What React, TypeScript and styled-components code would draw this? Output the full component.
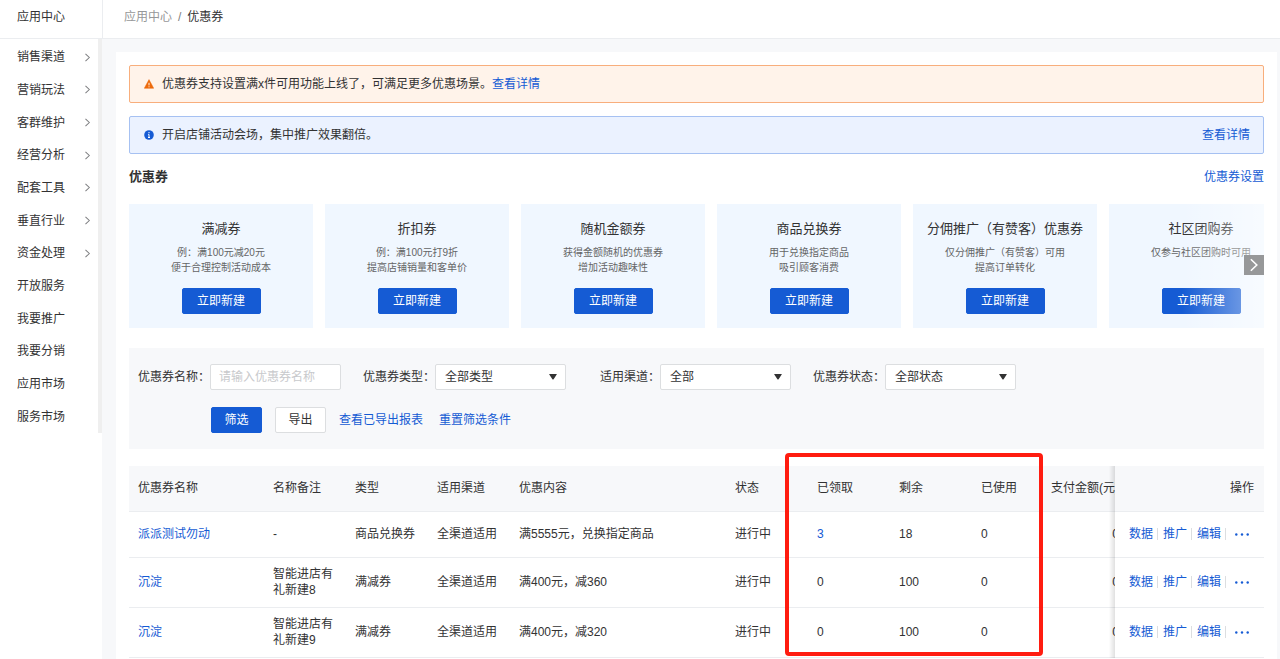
import React from 'react';
import styled, { createGlobalStyle, css } from 'styled-components';

const BLUE = '#155bd4';
const LINE = '#ebedf0';
const TEXT = 12;

const GlobalStyle = createGlobalStyle`
  *, *::before, *::after { box-sizing: border-box; }
  body {
    margin: 0;
    background: #fff;
    color: #323233;
    font: ${TEXT}px/16px "Liberation Sans", "Noto Sans CJK SC", sans-serif;
  }
  button, input, select { font: inherit; color: inherit; }
`;

const Page = styled.div`
  display: grid;
  grid-template-columns: 102px minmax(0, 1fr);
  grid-template-rows: 39px 1fr;
  min-height: 100vh;
`;

const SideTitle = styled.div`
  display: flex;
  align-items: center;
  padding: 0 17px 5px;
  border-bottom: 1px solid ${LINE};
`;

const TopBar = styled.header`
  display: flex;
  align-items: center;
  gap: 6px;
  padding: 0 21px 5px;
  border-left: 1px solid ${LINE};
  border-bottom: 1px solid ${LINE};
`;

const Crumb = styled.a`
  color: #969799;
  text-decoration: none;
`;

const Slash = styled.span`
  color: #7d7e80;
`;

const Sidebar = styled.div`
  display: flex;
  align-items: flex-start;
`;

const Menu = styled.nav`
  flex: 1;
  display: grid;
  grid-auto-rows: 1fr;
  min-height: 394px;
  padding-top: 2px;
  border-right: 4px solid #efefef;
`;

const MenuItem = styled.a`
  display: flex;
  align-items: center;
  justify-content: space-between;
  padding: 0 6px 0 17px;
  color: inherit;
  text-decoration: none;
`;

const Main = styled.main`
  display: flex;
  padding: 13px 3px 0 14px;
  background: #f7f8fa;
`;

const Panel = styled.div`
  flex: 1;
  min-width: 0;
  padding: 13px 13px 0;
  background: #fff;
`;

const Notice = styled.div<{ $tone: 'warn' | 'info' }>`
  display: flex;
  align-items: center;
  height: 38px;
  margin-bottom: 13px;
  padding: 0 13px 0 14px;
  border: 1px solid ${p => (p.$tone === 'warn' ? '#f8ae7c' : '#a6c1f2')};
  border-radius: 2px;
  background: ${p => (p.$tone === 'warn' ? '#fff3ea' : '#ebf2ff')};

  svg { margin-right: 8px; }
`;

const Link = styled.a<{ $push?: boolean }>`
  color: ${BLUE};
  text-decoration: none;
  white-space: nowrap;
  ${p => p.$push && css`margin-left: auto;`}
`;

const TitleRow = styled.div`
  display: flex;
  align-items: center;
  justify-content: space-between;
  margin-bottom: 18px;
  height: 19px;
`;

const Title = styled.h1`
  margin: 0;
  font-size: 13px;
  font-weight: 600;
`;

const Carousel = styled.section`
  position: relative;
  display: flex;
  gap: 12px;
  overflow: hidden;
`;

const Card = styled.article`
  flex: 0 0 184px;
  display: flex;
  flex-direction: column;
  align-items: center;
  height: 124px;
  padding: 16px 0 14px;
  background: #f0f7ff;
  text-align: center;
`;

const CardName = styled.h2`
  margin: 0 0 7px;
  font-size: 13px;
  font-weight: 400;
  line-height: 18px;
  white-space: nowrap;
`;

const CardText = styled.p`
  margin: 0;
  color: #646566;
  font-size: 10px;
  line-height: 15px;
  white-space: pre-line;
`;

const Button = styled.button<{ $primary?: boolean; $wide?: boolean }>`
  flex: none;
  width: ${p => (p.$wide ? 79 : 51)}px;
  height: 26px;
  padding: 0;
  border: 1px solid ${p => (p.$primary ? BLUE : '#dcdee0')};
  border-radius: 2px;
  background: ${p => (p.$primary ? BLUE : '#fff')};
  color: ${p => (p.$primary ? '#fff' : '#323233')};
  cursor: pointer;

  ${Card} & { margin-top: auto; }
`;

const Fade = styled.div`
  position: absolute;
  inset: 0 0 0 auto;
  width: 82px;
  background: linear-gradient(to right, rgba(255, 255, 255, 0), rgba(255, 255, 255, 0.5));
  pointer-events: none;
`;

const NextButton = styled.button`
  position: absolute;
  top: 51px;
  right: 0;
  display: grid;
  place-items: center;
  width: 20px;
  height: 20px;
  padding: 0;
  border: 0;
  background: #979899;
`;

const Filters = styled.form`
  display: grid;
  gap: 16px;
  margin: 20px 0 17px;
  padding: 16px 12px;
  background: #f7f8fa;
`;

const FilterRow = styled.div`
  display: flex;
  flex-wrap: wrap;
  gap: 16px 25px;
`;

const Field = styled.div`
  display: grid;
  grid-template-columns: 69px 131px;
  align-items: center;
`;

const Label = styled.label`
  justify-self: end;
  white-space: nowrap;
`;

const control = css`
  width: 100%;
  height: 26px;
  padding: 0 9px;
  border: 1px solid #dcdee0;
  border-radius: 2px;
  background: #fff;
`;

const TextInput = styled.input`
  ${control}
  padding: 0 8px;
  &::placeholder { color: #c8c9cc; }
`;

const SelectBox = styled.div`
  position: relative;

  svg {
    position: absolute;
    top: 10px;
    right: 9px;
    pointer-events: none;
  }
`;

const Select = styled.select`
  ${control}
  appearance: none;
`;

const FilterActions = styled.div`
  display: flex;
  align-items: center;
  gap: 13px;
  height: 27px;
  padding-left: 70px;
`;

const LinkGroup = styled.div`
  display: flex;
  gap: 16px;
`;

const TableArea = styled.section`
  position: relative;
`;

const TableScroller = styled.div`
  overflow: hidden;
`;

const Table = styled.table`
  width: 100%;
  min-width: 1149px;
  table-layout: fixed;
  border-spacing: 0;
`;

const Col = styled.col<{ $w?: number }>`
  ${p => p.$w && css`width: ${p.$w}px;`}
`;

const cell = css<{ $end?: boolean }>`
  height: 46px;
  padding: 8px 10px 9px 9px;
  border-bottom: 1px solid ${LINE};
  text-align: ${p => (p.$end ? 'right' : 'left')};
  font-weight: 400;
`;

const Th = styled.th<{ $end?: boolean }>`
  ${cell}
  background: #f7f8fa;
  white-space: nowrap;
`;

const Td = styled.td<{ $end?: boolean }>`
  ${cell}
  background: #fff;
`;

const pinned = css`
  position: sticky;
  right: 0;

  &::before {
    content: '';
    position: absolute;
    top: 0;
    bottom: -1px;
    left: -6px;
    width: 6px;
    background: linear-gradient(to left, rgba(0, 0, 0, 0.12), rgba(0, 0, 0, 0));
  }
`;

const PinnedTh = styled(Th)`${pinned}`;
const PinnedTd = styled(Td)`
  ${pinned}
  padding-left: 14px;
`;

const Actions = styled.div`
  display: flex;
  align-items: center;
`;

const Action = styled.a`
  padding-right: 4px;
  margin-right: 5px;
  border-right: 1px solid #dcdee0;
  color: ${BLUE};
  line-height: 12px;
  text-decoration: none;
  white-space: nowrap;
`;

const MoreButton = styled.button`
  display: flex;
  padding: 4px;
  border: 0;
  background: none;
  color: ${BLUE};
`;

const Highlight = styled.div`
  position: absolute;
  top: -13px;
  left: 656px;
  width: 258px;
  height: 203px;
  border: 4px solid #ff1c10;
  border-radius: 4px;
  pointer-events: none;
`;

const Chevron = ({ size, color }: { size: number; color: string }) => (
  <svg width={size} height={size} viewBox="0 0 8 8" fill="none" stroke={color} strokeWidth="0.9" aria-hidden="true">
    <path d="M2.2 0.7 5.6 4 2.2 7.3" />
  </svg>
);

const WarnIcon = () => (
  <svg width="10" height="10" viewBox="0 0 10 10" aria-hidden="true">
    <path d="M5 .6 9.7 9.3H.3Z" fill="#ed6a0c" stroke="#ed6a0c" strokeWidth=".5" strokeLinejoin="round" />
    <path d="M5 3.8V6.4M5 7.3V8.3" stroke="#fff3ea" strokeWidth="1" />
  </svg>
);

const InfoIcon = () => (
  <svg width="10" height="10" viewBox="0 0 10 10" aria-hidden="true">
    <circle cx="5" cy="5" r="4.8" fill={BLUE} />
    <path d="M5 2V3.2M4.2 4.4H5V7.4M4 7.5H6" stroke="#fff" strokeWidth="1" fill="none" />
  </svg>
);

const Caret = () => (
  <svg width="8" height="6" viewBox="0 0 8 6" aria-hidden="true">
    <path d="M0.4 0H7.6Q8 .2 7.7 .6L4.6 5.2Q4 5.8 3.4 5.2L.3 .6Q0 .2 .4 0Z" fill="#323233" />
  </svg>
);

const Dots = () => (
  <svg width="14" height="3" viewBox="0 0 14 3" fill="currentColor" aria-hidden="true">
    <circle cx="1.3" cy="1.5" r="1.2" />
    <circle cx="7" cy="1.5" r="1.2" />
    <circle cx="12.7" cy="1.5" r="1.2" />
  </svg>
);

const menu = [
  ['销售渠道', true], ['营销玩法', true], ['客群维护', true], ['经营分析', true],
  ['配套工具', true], ['垂直行业', true], ['资金处理', true], ['开放服务', false],
  ['我要推广', false], ['我要分销', false], ['应用市场', false], ['服务市场', false],
] as const;

const cards = [
  ['满减券', '例：满100元减20元\n便于合理控制活动成本'],
  ['折扣券', '例：满100元打9折\n提高店铺销量和客单价'],
  ['随机金额券', '获得金额随机的优惠券\n增加活动趣味性'],
  ['商品兑换券', '用于兑换指定商品\n吸引顾客消费'],
  ['分佣推广（有赞客）优惠券', '仅分佣推广（有赞客）可用\n提高订单转化'],
  ['社区团购券', '仅参与社区团购时可用'],
];

const selects = [
  ['type', '优惠券类型：', '全部类型'],
  ['channel', '适用渠道：', '全部'],
  ['status', '优惠券状态：', '全部状态'],
];

const rows = [
  { name: '派派测试勿动', note: '-', type: '商品兑换券', content: '满5555元，兑换指定商品', got: 3, left: 18 },
  { name: '沉淀', note: '智能进店有礼新建8', type: '满减券', content: '满400元，减360', got: 0, left: 100 },
  { name: '沉淀', note: '智能进店有礼新建9', type: '满减券', content: '满400元，减320', got: 0, left: 100 },
];

const columns: [string, number?][] = [
  ['优惠券名称', 135], ['名称备注', 82], ['类型', 82], ['适用渠道', 82], ['优惠内容'],
  ['状态', 82], ['已领取', 82], ['剩余', 82], ['已使用', 70], ['支付金额(元)', 87],
];

export default function App() {
  return (
    <Page>
      <GlobalStyle />
      <SideTitle>应用中心</SideTitle>
      <TopBar>
        <Crumb href="#apps">应用中心</Crumb>
        <Slash>/</Slash>
        <span>优惠券</span>
      </TopBar>

      <Sidebar>
        <Menu>
          {menu.map(([name, nested]) => (
            <MenuItem key={name} href="#menu">
              {name}
              {nested && <Chevron size={9} color="#7d7e80" />}
            </MenuItem>
          ))}
        </Menu>
      </Sidebar>

      <Main>
        <Panel>
          <Notice $tone="warn">
            <WarnIcon />
            优惠券支持设置满x件可用功能上线了，可满足更多优惠场景。
            <Link href="#detail">查看详情</Link>
          </Notice>
          <Notice $tone="info">
            <InfoIcon />
            开启店铺活动会场，集中推广效果翻倍。
            <Link href="#detail" $push>查看详情</Link>
          </Notice>

          <TitleRow>
            <Title>优惠券</Title>
            <Link href="#settings">优惠券设置</Link>
          </TitleRow>

          <Carousel>
            {cards.map(([name, text]) => (
              <Card key={name}>
                <CardName>{name}</CardName>
                <CardText>{text}</CardText>
                <Button type="button" $primary $wide>立即新建</Button>
              </Card>
            ))}
            <Fade />
            <NextButton type="button" aria-label="下一页">
              <Chevron size={14} color="#fff" />
            </NextButton>
          </Carousel>

          <Filters onSubmit={e => e.preventDefault()}>
            <FilterRow>
              <Field>
                <Label htmlFor="name">优惠券名称：</Label>
                <TextInput id="name" placeholder="请输入优惠券名称" />
              </Field>
              {selects.map(([id, label, value]) => (
                <Field key={id}>
                  <Label htmlFor={id}>{label}</Label>
                  <SelectBox>
                    <Select id={id}><option>{value}</option></Select>
                    <Caret />
                  </SelectBox>
                </Field>
              ))}
            </FilterRow>
            <FilterActions>
              <Button type="submit" $primary>筛选</Button>
              <Button type="button">导出</Button>
              <LinkGroup>
                <Link href="#reports">查看已导出报表</Link>
                <Link href="#reset">重置筛选条件</Link>
              </LinkGroup>
            </FilterActions>
          </Filters>

          <TableArea>
            <TableScroller>
              <Table>
                <colgroup>
                  {columns.map(([name, w]) => <Col key={name} $w={w} />)}
                  <Col $w={149} />
                </colgroup>
                <thead>
                  <tr>
                    {columns.map(([name], i) => <Th key={name} $end={i === 9}>{name}</Th>)}
                    <PinnedTh $end>操作</PinnedTh>
                  </tr>
                </thead>
                <tbody>
                  {rows.map((r, i) => (
                    <tr key={i}>
                      <Td><Link href="#coupon">{r.name}</Link></Td>
                      <Td>{r.note}</Td>
                      <Td>{r.type}</Td>
                      <Td>全渠道适用</Td>
                      <Td>{r.content}</Td>
                      <Td>进行中</Td>
                      <Td>{r.got ? <Link href="#received">{r.got}</Link> : r.got}</Td>
                      <Td>{r.left}</Td>
                      <Td>0</Td>
                      <Td $end>0</Td>
                      <PinnedTd>
                        <Actions>
                          <Action href="#data">数据</Action>
                          <Action href="#promote">推广</Action>
                          <Action href="#edit">编辑</Action>
                          <MoreButton type="button" aria-label="更多"><Dots /></MoreButton>
                        </Actions>
                      </PinnedTd>
                    </tr>
                  ))}
                </tbody>
              </Table>
            </TableScroller>
            <Highlight />
          </TableArea>
        </Panel>
      </Main>
    </Page>
  );
}
